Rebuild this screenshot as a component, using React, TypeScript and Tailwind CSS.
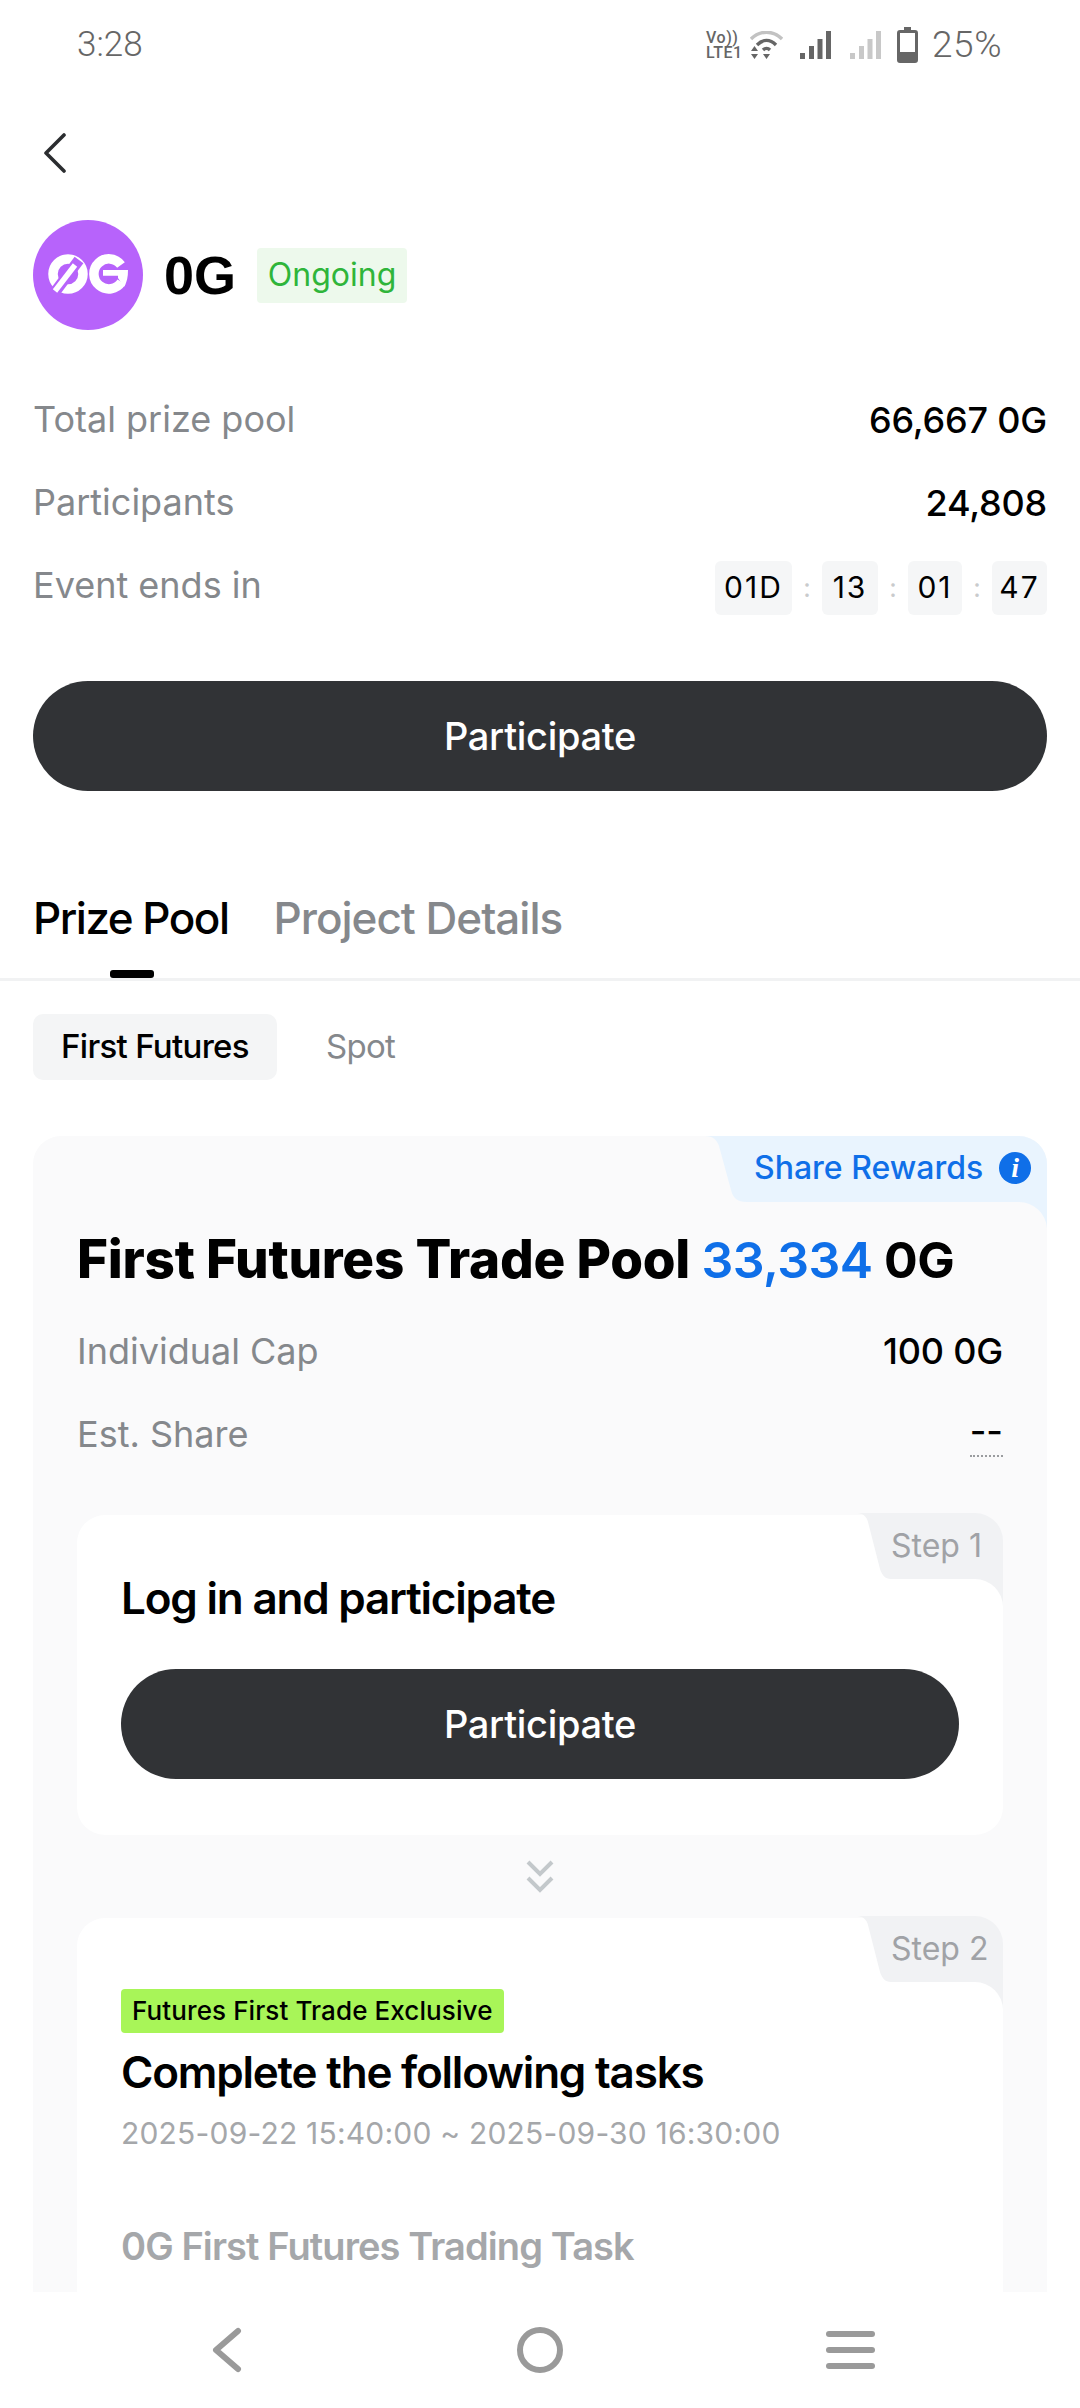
import type { ReactNode } from "react";

const BackChevron = () => (
  <svg width="24" height="40" viewBox="0 0 24 40" fill="none" stroke="#2b2d30" strokeWidth="3.6" strokeLinecap="round" strokeLinejoin="round">
    <path d="M21 2 L3 20 L21 38" />
  </svg>
);

const Logo = () => (
  <svg width="110" height="110" viewBox="0 0 110 110">
    <circle cx="55" cy="55" r="55" fill="#b763fb" />
    <circle cx="35" cy="54" r="15" fill="none" stroke="#fff" strokeWidth="9.5" />
    <path d="M19 76 L46 40" stroke="#b763fb" strokeWidth="11" fill="none" />
    <path d="M22 71 L42 45" stroke="#fff" strokeWidth="5.5" fill="none" />
    <path d="M88 45 A15 15 0 1 0 88.5 62" fill="none" stroke="#fff" strokeWidth="9.5" />
    <path d="M70 50 H95 C95 57 94 62 91 67 L85 58 H70 Z" fill="#fff" />
    <path d="M68 57 H85" stroke="#b763fb" strokeWidth="2.5" />
  </svg>
);

const Signal = ({ color }: { color: string }) => (
  <svg width="31" height="28" viewBox="0 0 31 28" fill={color}>
    <rect x="0" y="22" width="5" height="6" />
    <rect x="9" y="15" width="5" height="13" />
    <rect x="17.5" y="8" width="5" height="20" />
    <rect x="26" y="0" width="5" height="28" />
  </svg>
);

const StatusBar = () => (
  <div className="h-[88px] pt-[2px] flex items-center justify-between pl-[77px] pr-[78px] font-['Roboto',sans-serif] text-[35px] font-light text-[#666]">
    <span>3:28</span>
    <div className="flex items-center">
      <div className="w-[36px] flex flex-col font-['Roboto',sans-serif] text-[16px] font-medium leading-[15px] tracking-[0.5px]">
        <span>Vo))</span>
        <span>LTE1</span>
      </div>
      <svg className="ml-[8px]" width="33" height="28" viewBox="0 0 33 28" fill="none">
        <path d="M1 8 C10 -1 23 -1 32 8" stroke="#c2c2c2" strokeWidth="3.4" />
        <path d="M7 14 C13 8 20 8 26 14" stroke="#666" strokeWidth="3.4" />
        <path d="M13 19 C15 17 18 17 20 19" stroke="#666" strokeWidth="3.4" />
        <path d="M1 20 L4.5 15 L8 20 Z M1 23 L8 23 L4.5 28 Z M13 23 H20 L16.5 28 Z" fill="#666" />
      </svg>
      <div className="ml-[17px]">
        <Signal color="#666" />
      </div>
      <div className="ml-[19px]">
        <Signal color="#c8c8c8" />
      </div>
      <svg className="ml-[16px]" width="21" height="36" viewBox="0 0 21 36">
        <path d="M7 0 H14 V3 H18 A3 3 0 0 1 21 6 V33 A3 3 0 0 1 18 36 H3 A3 3 0 0 1 0 33 V6 A3 3 0 0 1 3 3 H7 Z" fill="#666" />
        <rect x="3" y="6" width="15" height="19" fill="#fff" />
      </svg>
      <span className="ml-[14px] text-[37px] tracking-[0.5px]">25%</span>
    </div>
  </div>
);

const Row = ({ label, children }: { label: string; children: ReactNode }) => (
  <div className="h-[83px] flex items-center justify-between">
    <span className="-mt-[2px] text-[#85888c]">{label}</span>
    {children}
  </div>
);

const TimeChip = ({ text, w }: { text: string; w: string }) => (
  <span className={`${w} h-[54px] flex items-center justify-center rounded-[6px] bg-[#f5f6f7] text-[30px] tracking-[2px] text-black`}>{text}</span>
);

const Colon = () => <span className="w-[30px] text-center text-[26px] text-[#c9cbcd]">:</span>;

const DarkButton = ({ className }: { className: string }) => (
  <button className={`${className} h-[110px] rounded-full bg-[#313336] text-[38px] font-medium tracking-[-0.3px] text-white`}>Participate</button>
);

const StepTab = ({ label }: { label: string }) => (
  <div className="absolute -top-[2px] right-0 w-[146px] h-[94px]">
    <svg className="absolute inset-0" width="146" height="94" viewBox="0 0 146 94">
      <path d="M0 0 H118 A28 28 0 0 1 146 28 V94 A28 28 0 0 0 118 66 H34 C28 66 25 62 23 56 L11 9 C10 4 6 0 0 0 Z" fill="#f1f2f4" />
    </svg>
    <span className="absolute left-[34px] top-[11px] text-[32px] leading-[44px] text-[#a0a2a6]">{label}</span>
  </div>
);

export default function App() {
  return (
    <div className="w-[1080px] h-[2408px] flex flex-col overflow-hidden bg-white font-['Inter',sans-serif] text-[36px]">
      <div className="flex-1 min-h-0 overflow-hidden">
        <StatusBar />

        <div className="px-[33px]">
          <div className="mt-[45px] ml-[10px]">
            <BackChevron />
          </div>

          <div className="mt-[47px] h-[110px] flex items-center">
            <Logo />
            <span className="ml-[21px] text-[54px] font-bold text-black font-['Liberation_Sans',sans-serif]">0G</span>
            <span className="ml-[21px] w-[150px] h-[55px] flex items-center justify-center rounded-[4px] bg-[#edf9ec] text-[32px] text-[#2fb53a]">Ongoing</span>
          </div>

          <div className="mt-[48px]">
            <Row label="Total prize pool">
              <span className="font-medium tracking-[-0.2px] text-black">66,667 0G</span>
            </Row>
            <Row label="Participants">
              <span className="font-medium tracking-[-0.2px] text-black">24,808</span>
            </Row>
            <Row label="Event ends in">
              <div className="flex items-center mt-[4px]">
                <TimeChip text="01D" w="w-[77px]" />
                <Colon />
                <TimeChip text="13" w="w-[56px]" />
                <Colon />
                <TimeChip text="01" w="w-[54px]" />
                <Colon />
                <TimeChip text="47" w="w-[55px]" />
              </div>
            </Row>
          </div>

          <DarkButton className="mt-[54px] w-full" />
        </div>

        <div className="mt-[80px] h-[110px] px-[33px] relative border-b-[3px] border-[#f1f2f3] flex gap-[45px] text-[44px] font-medium tracking-[-1px] leading-[54px] pt-[20px]">
          <span className="tracking-[-1.5px] text-black">Prize Pool</span>
          <span className="text-[#85888c]">Project Details</span>
          <span className="absolute left-[110px] bottom-0 w-[44px] h-[8px] rounded-[3px] bg-black" />
        </div>

        <div className="px-[33px]">
          <div className="mt-[33px] flex items-center tracking-[-0.7px]">
            <span className="w-[244px] h-[66px] flex items-center justify-center rounded-[10px] bg-[#f4f5f6] text-[33px] font-medium text-black">First Futures</span>
            <span className="ml-[49px] text-[33px] text-[#85888c]">Spot</span>
          </div>

          <div className="mt-[56px] rounded-t-[28px] bg-[#fafafb] relative px-[44px] pt-[90px] pb-[40px]">
            <div className="absolute top-0 right-0 w-[342px] h-[92px]">
              <svg className="absolute inset-0" width="342" height="92" viewBox="0 0 342 92">
                <path d="M0 0 H314 A28 28 0 0 1 342 28 V92 A28 28 0 0 0 314 66 H42 C32 66 28 62 26 54 L14 10 C12 4 8 0 0 0 Z" fill="#e9f4fe" />
              </svg>
              <div className="absolute left-[49px] top-[9px] flex items-center text-[32px] leading-[46px] font-medium text-[#0f6fe8]">
                <span>Share Rewards</span>
                <span className="ml-[16px] w-[32px] h-[32px] rounded-full bg-[#0f6fe8] flex items-center justify-center font-['Liberation_Serif',serif] italic font-bold text-[28px] leading-none text-white">i</span>
              </div>
            </div>

            <h2 className="h-[68px] flex items-center text-[53px] font-extrabold tracking-[-0.25px] text-black">
              First Futures Trade Pool&nbsp;<span className="text-[50px] tracking-[-0.5px] text-[#0f6fe8] font-semibold">33,334</span>
              <span className="text-[50px] font-bold tracking-[-0.5px]">&nbsp;0G</span>
            </h2>

            <div className="mt-[29px] h-[56px] flex items-center justify-between">
              <span className="text-[#85888c]">Individual Cap</span>
              <span className="font-medium tracking-[-0.2px] text-black">100 0G</span>
            </div>
            <div className="mt-[27px] h-[56px] flex items-center justify-between">
              <span className="text-[#85888c]">Est. Share</span>
              <span className="h-[46px] border-b-[2px] border-dotted border-[#9a9c9f] font-medium leading-[40px] text-black">--</span>
            </div>

            <div className="mt-[53px] relative rounded-[28px] bg-white h-[320px] px-[44px] pt-[56px]">
              <StepTab label="Step 1" />
              <h3 className="text-[44px] font-semibold tracking-[-1.2px] leading-[54px] text-black">Log in and participate</h3>
              <DarkButton className="mt-[44px] w-full" />
            </div>

            <div className="h-[83px] flex items-center justify-center">
              <svg width="28" height="34" viewBox="0 0 28 34" fill="none" stroke="#c3c8cb" strokeWidth="4">
                <path d="M2 2 L14 14 L26 2" />
                <path d="M2 18 L14 30 L26 18" />
              </svg>
            </div>

            <div className="relative rounded-t-[28px] bg-white h-[500px] px-[44px] pt-[62px]">
              <StepTab label="Step 2" />
              <span className="inline-flex items-center h-[44px] px-[11px] rounded-[4px] bg-[#a8f558] text-[26px] font-medium tracking-[0.1px] text-black">Futures First Trade Exclusive</span>
              <h3 className="mt-[11px] text-[44px] font-semibold tracking-[-1.2px] leading-[54px] text-black">Complete the following tasks</h3>
              <div className="mt-[14px] text-[30px] tracking-[0.2px] leading-[40px] text-[#a5a7aa]">2025-09-22 15:40:00 ~ 2025-09-30 16:30:00</div>
              <div className="mt-[70px] text-[38px] font-semibold tracking-[-0.9px] leading-[46px] text-[#a5a7aa]">0G First Futures Trading Task</div>
            </div>
          </div>
        </div>
      </div>

      <div className="h-[116px] shrink-0 bg-white flex items-center justify-between pl-[211px] pr-[205px]">
        <svg width="32" height="46" viewBox="0 0 32 46" fill="none" stroke="#9a9a9a" strokeWidth="6" strokeLinecap="round" strokeLinejoin="round">
          <path d="M27 4 L5 23 L27 42" />
        </svg>
        <span className="ml-[10px] w-[46px] h-[46px] rounded-full border-[6px] border-[#9a9a9a]" />
        <div className="w-[49px] flex flex-col gap-[10px]">
          <span className="h-[6px] rounded-full bg-[#9a9a9a]" />
          <span className="h-[6px] rounded-full bg-[#9a9a9a]" />
          <span className="h-[6px] rounded-full bg-[#9a9a9a]" />
        </div>
      </div>
    </div>
  );
}
